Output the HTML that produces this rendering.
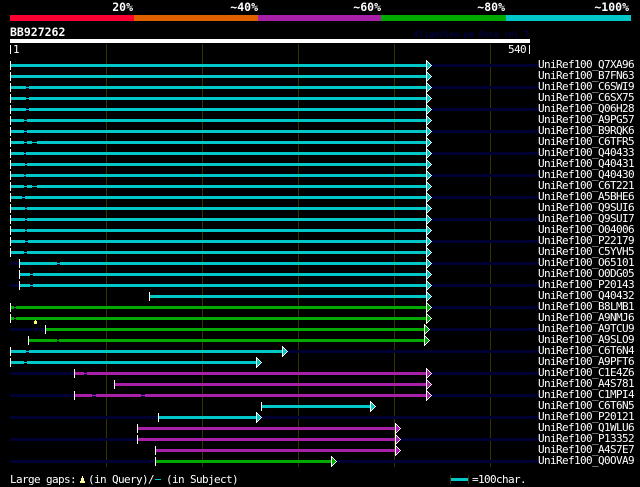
<!DOCTYPE html>
<html><head><meta charset="utf-8"><style>
html,body{margin:0;padding:0;background:#000;width:640px;height:487px;overflow:hidden}
svg{display:block}
rect,polygon{shape-rendering:crispEdges}
text{font-family:"DejaVu Sans Mono","Liberation Mono",monospace;fill:#fff;font-size:11px;letter-spacing:-.62px;white-space:pre}
.b{font-weight:bold;font-size:11.5px;letter-spacing:0}
.t{fill:none;stroke-width:1}
</style></head><body>
<svg width="640" height="487" viewBox="0 0 640 487" xmlns="http://www.w3.org/2000/svg">
<defs><g id="a"><path fill="#fff" d="M0 0h1v11h-1zM1 1h1v1h-1zM2 2h1v1h-1zM3 3h1v1h-1zM4 4h1v1h-1zM5 5h1v1h-1zM4 6h1v1h-1zM3 7h1v1h-1zM2 8h1v1h-1zM1 9h1v1h-1z"/><path fill="currentColor" d="M1 2h1v7h-1zM2 3h1v5h-1zM3 4h1v3h-1zM4 5h1v1h-1z"/></g></defs>
<rect x="10" y="15" width="124" height="6" fill="#ff0033"/>
<rect x="134" y="15" width="124" height="6" fill="#e06000"/>
<rect x="258" y="15" width="123" height="6" fill="#a820a8"/>
<rect x="381" y="15" width="125" height="6" fill="#00aa00"/>
<rect x="506" y="15" width="125" height="6" fill="#00c8c8"/>
<text class="b" x="133" y="11" text-anchor="end">20%</text>
<text class="b" x="258" y="11" text-anchor="end">~40%</text>
<text class="b" x="381" y="11" text-anchor="end">~60%</text>
<text class="b" x="505" y="11" text-anchor="end">~80%</text>
<text class="b" x="629" y="11" text-anchor="end">~100%</text>
<text class="b" x="10" y="36">BB927262</text>
<text x="414" y="37" style="font-size:8.3px;font-weight:bold;fill:#000044;letter-spacing:0">AlignView.pm Beta rel.7</text>
<rect x="10" y="39" width="520" height="4" fill="#fff"/>
<rect x="10" y="45" width="1" height="9" fill="#fff"/>
<rect x="529" y="45" width="1" height="9" fill="#fff"/>
<text x="13" y="53">1</text>
<text x="508" y="53">540</text>
<path d="M106.5 44V467M202.5 44V467M298.5 44V467M394.5 44V467M490.5 44V467" stroke="#333300" fill="none"/>
<path fill="none" stroke="#000033" stroke-width="3" d="M10 65.5H538M10 87.5H538M10 109.5H538M10 131.5H538M10 153.5H538M10 175.5H538M10 197.5H538M10 219.5H538M10 241.5H538M10 263.5H538M10 285.5H538M10 307.5H538M10 329.5H538M10 351.5H538M10 373.5H538M10 395.5H538M10 417.5H538M10 439.5H538M10 461.5H538"/>
<path class="t" stroke="#00c8c8" d="M26 87.5H29M26 98.5H29M26 109.5H29M24 120.5H27M24 131.5H27M24 142.5H37M24 153.5H26M25 164.5H27M24 175.5H26M24 186.5H37M22 197.5H25M25 208.5H27M25 219.5H27M25 230.5H27M25 241.5H28M24 252.5H27M57 263.5H60M30 274.5H33M30 285.5H33M26 351.5H29M24 362.5H27"/>
<path class="t" stroke="#00aa00" d="M14 307.5H16M14 318.5H16M57 340.5H59"/>
<path class="t" stroke="#a820a8" d="M84 373.5H87M92 395.5H96M141 395.5H145"/>
<g fill="none" stroke-width="3">
<path stroke="#00c8c8" d="M11 65.5H426M11 76.5H426M11 87.5H26M29 87.5H426M11 98.5H26M29 98.5H426M11 109.5H26M29 109.5H426M11 120.5H24M27 120.5H426M11 131.5H24M27 131.5H426M11 142.5H24M27 142.5H32M37 142.5H426M11 153.5H24M26 153.5H426M11 164.5H25M27 164.5H426M11 175.5H24M26 175.5H426M11 186.5H24M27 186.5H32M37 186.5H426M11 197.5H22M25 197.5H426M11 208.5H25M27 208.5H426M11 219.5H25M27 219.5H426M11 230.5H25M27 230.5H426M11 241.5H25M28 241.5H426M11 252.5H24M27 252.5H426M20 263.5H57M60 263.5H426M20 274.5H30M33 274.5H426M20 285.5H30M33 285.5H426M150 296.5H426M11 351.5H26M29 351.5H282M11 362.5H24M27 362.5H256M262 406.5H370M159 417.5H256"/>
<path stroke="#00aa00" d="M11 307.5H14M16 307.5H426M11 318.5H14M16 318.5H426M46 329.5H424M29 340.5H57M59 340.5H424M156 461.5H331"/>
<path stroke="#a820a8" d="M75 373.5H84M87 373.5H426M115 384.5H426M75 395.5H92M96 395.5H141M145 395.5H426M138 428.5H395M138 439.5H395M156 450.5H395"/>
</g>
<path fill="none" stroke="#fff" d="M10.5 61V70M10.5 72V81M10.5 83V92M10.5 94V103M10.5 105V114M10.5 116V125M10.5 127V136M10.5 138V147M10.5 149V158M10.5 160V169M10.5 171V180M10.5 182V191M10.5 193V202M10.5 204V213M10.5 215V224M10.5 226V235M10.5 237V246M10.5 248V257M19.5 259V268M19.5 270V279M19.5 281V290M149.5 292V301M10.5 303V312M10.5 314V323M45.5 325V334M28.5 336V345M10.5 347V356M10.5 358V367M74.5 369V378M114.5 380V389M74.5 391V400M261.5 402V411M158.5 413V422M137.5 424V433M137.5 435V444M155.5 446V455M155.5 457V466"/>
<g color="#00c8c8">
<use href="#a" x="426" y="60"/><use href="#a" x="426" y="71"/><use href="#a" x="426" y="82"/><use href="#a" x="426" y="93"/><use href="#a" x="426" y="104"/><use href="#a" x="426" y="115"/><use href="#a" x="426" y="126"/><use href="#a" x="426" y="137"/><use href="#a" x="426" y="148"/><use href="#a" x="426" y="159"/><use href="#a" x="426" y="170"/><use href="#a" x="426" y="181"/><use href="#a" x="426" y="192"/><use href="#a" x="426" y="203"/><use href="#a" x="426" y="214"/><use href="#a" x="426" y="225"/><use href="#a" x="426" y="236"/><use href="#a" x="426" y="247"/><use href="#a" x="426" y="258"/><use href="#a" x="426" y="269"/><use href="#a" x="426" y="280"/><use href="#a" x="426" y="291"/>
<use href="#a" x="282" y="346"/><use href="#a" x="256" y="357"/><use href="#a" x="370" y="401"/><use href="#a" x="256" y="412"/>
</g>
<g color="#00aa00">
<use href="#a" x="426" y="302"/><use href="#a" x="426" y="313"/><use href="#a" x="424" y="324"/><use href="#a" x="424" y="335"/><use href="#a" x="331" y="456"/>
</g>
<g color="#a820a8">
<use href="#a" x="426" y="368"/><use href="#a" x="426" y="379"/><use href="#a" x="426" y="390"/><use href="#a" x="395" y="423"/><use href="#a" x="395" y="434"/><use href="#a" x="395" y="445"/>
</g>
<polygon points="35,320 36,320 36,321 37,321 37,324 34,324 34,321 35,321" fill="#ffff66"/>
<text x="538" y="68">UniRef100_Q7XA96</text>
<text x="538" y="79">UniRef100_B7FN63</text>
<text x="538" y="90">UniRef100_C6SWI9</text>
<text x="538" y="101">UniRef100_C6SX75</text>
<text x="538" y="112">UniRef100_Q06H28</text>
<text x="538" y="123">UniRef100_A9PG57</text>
<text x="538" y="134">UniRef100_B9RQK6</text>
<text x="538" y="145">UniRef100_C6TFR5</text>
<text x="538" y="156">UniRef100_Q40433</text>
<text x="538" y="167">UniRef100_Q40431</text>
<text x="538" y="178">UniRef100_Q40430</text>
<text x="538" y="189">UniRef100_C6T221</text>
<text x="538" y="200">UniRef100_A5BHE6</text>
<text x="538" y="211">UniRef100_Q9SUI6</text>
<text x="538" y="222">UniRef100_Q9SUI7</text>
<text x="538" y="233">UniRef100_O04006</text>
<text x="538" y="244">UniRef100_P22179</text>
<text x="538" y="255">UniRef100_C5YVH5</text>
<text x="538" y="266">UniRef100_O65101</text>
<text x="538" y="277">UniRef100_O0DG05</text>
<text x="538" y="288">UniRef100_P20143</text>
<text x="538" y="299">UniRef100_Q40432</text>
<text x="538" y="310">UniRef100_B8LMB1</text>
<text x="538" y="321">UniRef100_A9NMJ6</text>
<text x="538" y="332">UniRef100_A9TCU9</text>
<text x="538" y="343">UniRef100_A9SLO9</text>
<text x="538" y="354">UniRef100_C6T6N4</text>
<text x="538" y="365">UniRef100_A9PFT6</text>
<text x="538" y="376">UniRef100_C1E4Z6</text>
<text x="538" y="387">UniRef100_A4S781</text>
<text x="538" y="398">UniRef100_C1MPI4</text>
<text x="538" y="409">UniRef100_C6T6N5</text>
<text x="538" y="420">UniRef100_P20121</text>
<text x="538" y="431">UniRef100_Q1WLU6</text>
<text x="538" y="442">UniRef100_P13352</text>
<text x="538" y="453">UniRef100_A4S7E7</text>
<text x="538" y="464">UniRef100_Q0OVA9</text>
<text x="10" y="483">Large gaps:</text>
<polygon points="82,476 83,476 83,478 84,478 84,481 85,481 85,483 80,483 80,481 81,481 81,478 82,478" fill="#ffff99"/>
<text x="88" y="483">(in Query)/</text>
<rect x="155" y="479" width="6" height="1" fill="#00c8c8"/>
<text x="166" y="483">(in Subject)</text>
<rect x="450" y="475" width="1" height="9" fill="#333300"/>
<rect x="468" y="475" width="1" height="9" fill="#333300"/>
<rect x="451" y="478" width="17" height="3" fill="#00c8c8"/>
<text x="472" y="483">=100char.</text>
</svg>
</body></html>
